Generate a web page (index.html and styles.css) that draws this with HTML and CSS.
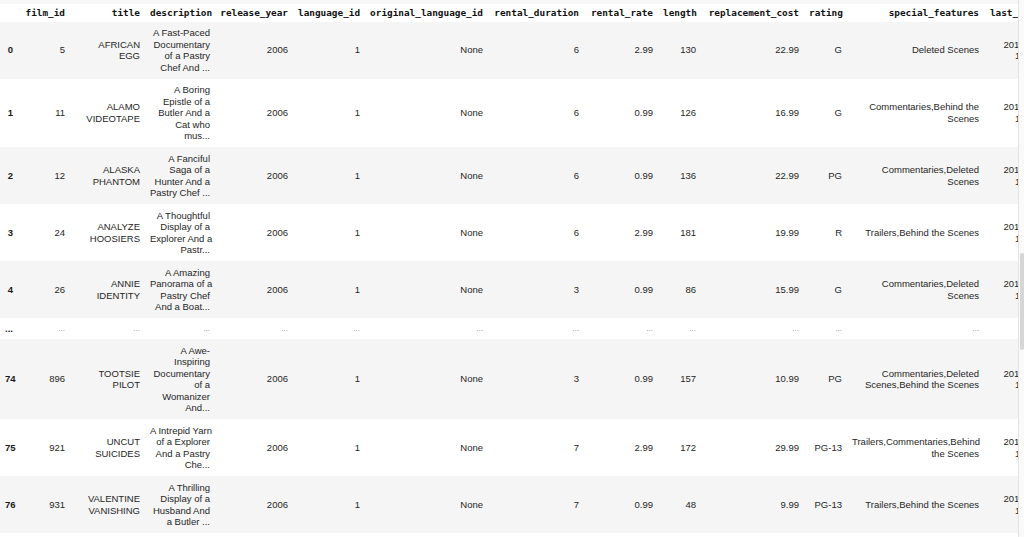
FILE: index.html
```html
<!DOCTYPE html>
<html>
<head>
<meta charset="utf-8">
<link rel="stylesheet" href="styles.css">
</head>
<body>
<div class="page">
  <div class="output">
    <div class="topband"></div>
    <table class="dataframe">
      <colgroup>
        <col class="c-idx"><col class="c-film"><col class="c-title"><col class="c-desc"><col class="c-year"><col class="c-lang"><col class="c-orig"><col class="c-dur"><col class="c-rate"><col class="c-len"><col class="c-cost"><col class="c-rating"><col class="c-feat"><col class="c-upd">
      </colgroup>
      <thead>
        <tr>
          <th></th><th>film_id</th><th>title</th><th>description</th><th>release_year</th><th>language_id</th><th>original_language_id</th><th>rental_duration</th><th>rental_rate</th><th>length</th><th>replacement_cost</th><th>rating</th><th>special_features</th><th>last_update</th>
        </tr>
      </thead>
      <tbody>
        <tr>
          <th>0</th><td>5</td><td>AFRICAN<br>EGG</td><td>A Fast-Paced<br>Documentary<br>of a Pastry<br>Chef And ...</td><td>2006</td><td>1</td><td>None</td><td>6</td><td>2.99</td><td>130</td><td>22.99</td><td>G</td><td>Deleted Scenes</td><td>2013-05-26<br>14:50:58</td>
        </tr>
        <tr>
          <th>1</th><td>11</td><td>ALAMO<br>VIDEOTAPE</td><td>A Boring<br>Epistle of a<br>Butler And a<br>Cat who<br>mus...</td><td>2006</td><td>1</td><td>None</td><td>6</td><td>0.99</td><td>126</td><td>16.99</td><td>G</td><td>Commentaries,Behind the<br>Scenes</td><td>2013-05-26<br>14:50:58</td>
        </tr>
        <tr>
          <th>2</th><td>12</td><td>ALASKA<br>PHANTOM</td><td>A Fanciful<br>Saga of a<br>Hunter And a<br>Pastry Chef ...</td><td>2006</td><td>1</td><td>None</td><td>6</td><td>0.99</td><td>136</td><td>22.99</td><td>PG</td><td>Commentaries,Deleted<br>Scenes</td><td>2013-05-26<br>14:50:58</td>
        </tr>
        <tr>
          <th>3</th><td>24</td><td>ANALYZE<br>HOOSIERS</td><td>A Thoughtful<br>Display of a<br>Explorer And a<br>Pastr...</td><td>2006</td><td>1</td><td>None</td><td>6</td><td>2.99</td><td>181</td><td>19.99</td><td>R</td><td>Trailers,Behind the Scenes</td><td>2013-05-26<br>14:50:58</td>
        </tr>
        <tr>
          <th>4</th><td>26</td><td>ANNIE<br>IDENTITY</td><td>A Amazing<br>Panorama of a<br>Pastry Chef<br>And a Boat...</td><td>2006</td><td>1</td><td>None</td><td>3</td><td>0.99</td><td>86</td><td>15.99</td><td>G</td><td>Commentaries,Deleted<br>Scenes</td><td>2013-05-26<br>14:50:58</td>
        </tr>
        <tr class="ellipsis">
          <th>...</th><td>...</td><td>...</td><td>...</td><td>...</td><td>...</td><td>...</td><td>...</td><td>...</td><td>...</td><td>...</td><td>...</td><td>...</td><td>...</td>
        </tr>
        <tr>
          <th>74</th><td>896</td><td>TOOTSIE<br>PILOT</td><td>A Awe-<br>Inspiring<br>Documentary<br>of a<br>Womanizer<br>And...</td><td>2006</td><td>1</td><td>None</td><td>3</td><td>0.99</td><td>157</td><td>10.99</td><td>PG</td><td>Commentaries,Deleted<br>Scenes,Behind the Scenes</td><td>2013-05-26<br>14:50:58</td>
        </tr>
        <tr>
          <th>75</th><td>921</td><td>UNCUT<br>SUICIDES</td><td>A Intrepid Yarn<br>of a Explorer<br>And a Pastry<br>Che...</td><td>2006</td><td>1</td><td>None</td><td>7</td><td>2.99</td><td>172</td><td>29.99</td><td>PG-13</td><td>Trailers,Commentaries,Behind<br>the Scenes</td><td>2013-05-26<br>14:50:58</td>
        </tr>
        <tr>
          <th>76</th><td>931</td><td>VALENTINE<br>VANISHING</td><td>A Thrilling<br>Display of a<br>Husband And<br>a Butler ...</td><td>2006</td><td>1</td><td>None</td><td>7</td><td>0.99</td><td>48</td><td>9.99</td><td>PG-13</td><td>Trailers,Behind the Scenes</td><td>2013-05-26<br>14:50:58</td>
        </tr>
      </tbody>
    </table>
  </div>
  <div class="scrollbar"><div class="thumb"></div></div>
</div>
</body>
</html>
```
FILE: styles.css
```css
html, body {
  margin: 0;
  padding: 0;
  background: #ffffff;
}
.page {
  display: flex;
  width: 1024px;
  height: 537px;
  overflow: hidden;
}
.output {
  width: 1018px;
  flex: none;
  overflow: hidden;
}
.topband {
  height: 4px;
  background: #f7f7f7;
}
.dataframe {
  border-collapse: collapse;
  border-spacing: 0;
  table-layout: fixed;
  width: 1057px;
  font-family: "Liberation Sans", Arial, sans-serif;
  font-size: 9.5px;
  line-height: 11.5px;
  color: #262626;
}
.c-idx { width: 18px; }
.c-film { width: 52px; }
.c-title { width: 75px; }
.c-desc { width: 70px; }
.c-year { width: 78px; }
.c-lang { width: 72px; }
.c-orig { width: 123px; }
.c-dur { width: 96px; }
.c-rate { width: 74px; }
.c-len { width: 43px; }
.c-cost { width: 103px; }
.c-rating { width: 43px; }
.c-feat { width: 137px; }
.c-upd { width: 73px; }

.dataframe th,
.dataframe td {
  padding: 5.5px 5px;
  text-align: right;
  vertical-align: middle;
  white-space: nowrap;
  border: none;
}
.dataframe thead th {
  padding: 3px 5px;
  font-family: "DejaVu Sans Mono", "Liberation Mono", monospace;
  font-weight: bold;
  font-size: 9.4px;
  color: #111;
  background: #ffffff;
}
.dataframe tbody th {
  font-weight: bold;
  color: #1a1a1a;
}
.dataframe tbody tr:nth-child(odd) {
  background: #f5f5f5;
}
.dataframe tbody tr:nth-child(even) {
  background: #ffffff;
}
.dataframe tbody tr.ellipsis td,
.dataframe tbody tr.ellipsis th {
  padding-top: 5px;
  padding-bottom: 4.5px;
}
.dataframe tbody tr.ellipsis td {
  color: #8a8a8a;
  font-size: 8px;
}
.scrollbar {
  width: 5px;
  flex: none;
  border-left: 1px solid #e3e3e3;
  background: #fafafa;
  padding-top: 253px;
}
.thumb {
  width: 4px;
  height: 97px;
  margin-left: 1px;
  border-radius: 2px;
  background: #d6d6d6;
}
```
